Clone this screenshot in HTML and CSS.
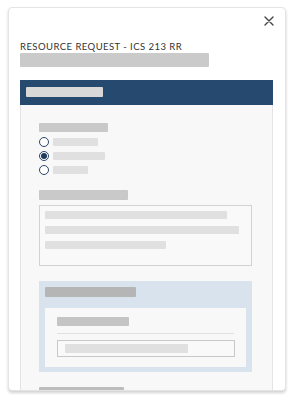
FILE: index.html
```html
<!DOCTYPE html>
<html>
<head>
<meta charset="utf-8">
<link rel="stylesheet" href="styles.css">
</head>
<body>
<div class="modal">
  <div class="top">
    <svg class="close" width="10" height="10" viewBox="0 0 10 10"><path d="M1 1L9 9M9 1L1 9" stroke="#444" stroke-width="1.4" stroke-linecap="round"/></svg>
  </div>
  <div class="title">RESOURCE REQUEST - ICS 213 RR</div>
  <div class="sk sk-sub"></div>
  <div class="panel">
    <div class="panel-head"><div class="sk sk-head"></div></div>
    <div class="panel-body">
      <div class="sk sk-label" style="width:69px"></div>
      <div class="radios">
        <div class="radio"><span class="dot"></span><span class="sk sk-opt" style="width:45px"></span></div>
        <div class="radio"><span class="dot on"></span><span class="sk sk-opt" style="width:52px"></span></div>
        <div class="radio"><span class="dot"></span><span class="sk sk-opt" style="width:35px"></span></div>
      </div>
      <div class="sk sk-label2" style="width:89px"></div>
      <div class="textarea">
        <div class="sk sk-line" style="width:182px"></div>
        <div class="sk sk-line" style="width:194px"></div>
        <div class="sk sk-line" style="width:121px"></div>
      </div>
      <div class="group">
        <div class="sk sk-ghead"></div>
        <div class="group-inner">
          <div class="sk sk-ilabel"></div>
          <div class="divider"></div>
          <div class="input"><div class="sk sk-ival"></div></div>
        </div>
      </div>
      <div class="sk sk-label3" style="width:85px"></div>
    </div>
  </div>
</div>
</body>
</html>
```

FILE: styles.css
```css
html, body { margin: 0; padding: 0; background: #fff; }
body { width: 292px; height: 400px; overflow: hidden; font-family: Lato, "Liberation Sans", sans-serif; }
.modal {
  box-sizing: border-box;
  margin: 7px 6px 0 8px;
  width: 278px;
  height: 384px;
  padding: 0 12px;
  background: #fff;
  border: 1px solid #e4e4e4;
  border-radius: 4px;
  box-shadow: 0 2px 3px rgba(0,0,0,0.18);
  overflow: hidden;
}
.top { height: 33px; display: flex; justify-content: flex-end; align-items: flex-start; }
.close { margin-top: 8px; margin-right: -1px; }
.title {
  font-size: 9.5px;
  line-height: 12px;
  letter-spacing: 0.45px;
  color: #333;
  white-space: nowrap;
  margin-left: -1px;
}
.sk { background: #d9d9d9; border-radius: 1px; }
.sk-sub { width: 189px; height: 14px; background: #cacaca; margin-left: -1px; }
.panel { margin-top: 13px; margin-left: -1px; border: 1px solid #e4e4e4; border-top: 0; background: #f8f8f8; }
.panel-head { background: #26496f; height: 25px; padding: 7px 0 0 6px; box-sizing: border-box; margin: 0 -1px; }
.sk-head { width: 77px; height: 10px; background: #d8d8d8; }
.panel-body { padding: 18px 0 0 18px; }
.sk-label { height: 9px; background: #c9c9c9; }
.radios { margin-top: 3px; }
.radio { height: 14px; display: flex; align-items: center; }
.dot { box-sizing: border-box; width: 10px; height: 10px; border: 1px solid #2b4666; border-radius: 50%; background: #fff; margin-right: 4px; display: flex; align-items: center; justify-content: center; }
.dot.on::after { content: ""; width: 6px; height: 6px; border-radius: 50%; background: #1e3a5c; }
.sk-opt { display: block; height: 8px; background: #e0e0e0; }
.sk-label2 { margin-top: 13px; height: 10px; background: #c9c9c9; }
.textarea { margin-top: 5px; width: 213px; box-sizing: border-box; height: 61px; border: 1px solid #d2d2d2; background: #f9f9f9; padding: 5px 0 0 5px; }
.sk-line { height: 8px; background: #e0e0e0; margin-bottom: 7px; }
.group { margin-top: 15px; width: 213px; box-sizing: border-box; background: #d9e3ee; padding: 6px 6px 5px 6px; }
.sk-ghead { width: 91px; height: 10px; background: #b5b5b5; }
.group-inner { margin-top: 11px; background: #f8f8f8; padding: 9px 0 10px 12px; }
.sk-ilabel { width: 72px; height: 9px; background: #c4c4c4; }
.divider { width: 177px; height: 1px; background: #e0e0e0; margin-top: 7px; }
.input { margin-top: 6px; width: 178px; height: 17px; box-sizing: border-box; border: 1px solid #c8c8c8; background: #f9f9f9; padding: 3px 0 0 7px; }
.sk-ival { width: 123px; height: 9px; background: #e0e0e0; }
.sk-label3 { margin-top: 15px; height: 10px; background: #bdbdbd; }
```
